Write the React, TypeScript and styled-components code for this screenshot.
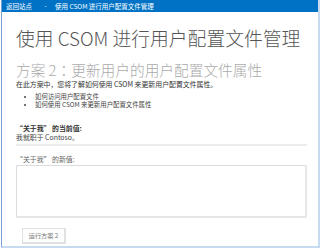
import React from "react";
import styled, { createGlobalStyle } from "styled-components";

const Global = createGlobalStyle`
  html, body { margin: 0; padding: 0; background: #ffffff; }
  body { font-family: "Segoe UI", "Noto Sans CJK SC", "Noto Sans", sans-serif; }
`;

const Frame = styled.div`
  box-sizing: border-box;
  width: 319px;
  height: 248px;
  margin-left: 1px;
  border-left: 1px solid #7c9fd3;
  border-right: 2px solid #c6daf1;
  border-bottom: 2px solid #c6daf1;
  display: flex;
  flex-direction: column;
  overflow: hidden;
  background: #fff;
`;

const TopBar = styled.div`
  height: 12px;
  flex: none;
  background: #0072c6;
  display: flex;
  align-items: center;
  padding-left: 4px;
  color: #fff;
  font-size: 6.5px;
  line-height: 12px;
  white-space: nowrap;
`;

const Crumb = styled.span`
  color: #ffffff;
`;

const Sep = styled.span`
  color: #dfe9f5;
  font-size: 5px;
  margin: 0 7px 0 11px;
`;

const Content = styled.div`
  flex: 1;
  display: flex;
  flex-direction: column;
  padding: 14px 9px 0 14px;
  min-height: 0;
`;

const Title = styled.h1`
  margin: 0;
  font-weight: 300;
  font-size: 18.8px;
  line-height: 24px;
  color: #555555;
  white-space: nowrap;
`;

const Subtitle = styled.h2`
  margin: 11px 0 0;
  font-weight: 300;
  font-size: 14.7px;
  line-height: 18px;
  color: #aaaaaa;
  white-space: nowrap;
`;

const Colon = styled.span`
  font-family: "Noto Sans CJK JP", sans-serif;
`;

const Para = styled.p`
  margin: 0;
  font-size: 6.9px;
  line-height: 10px;
  color: #333;
  white-space: nowrap;
`;

const List = styled.ul`
  margin: 4px 0 0;
  padding-left: 19px;
  list-style: disc;
  font-size: 6.4px;
  line-height: 8px;
  color: #444;
`;

const Item = styled.li`
  white-space: nowrap;
  height: 8px;
`;

const Section = styled.div`
  margin-top: 15px;
  display: flex;
  flex-direction: column;
`;

const Label = styled.div<{ $bold?: boolean }>`
  font-size: 6.9px;
  line-height: 8px;
  font-weight: ${(p) => (p.$bold ? 700 : 400)};
  color: ${(p) => (p.$bold ? "#333" : "#666")};
  white-space: nowrap;
`;

const Value = styled.div`
  margin-top: 1px;
  font-size: 6.9px;
  line-height: 8px;
  color: #444;
  white-space: nowrap;
`;

const Rule = styled.div`
  height: 2px;
  background: #ececec;
  margin: 3px 2px 0 0;
`;

const NewLabel = styled(Label)`
  margin-top: 9px;
`;

const TextBox = styled.div`
  box-sizing: border-box;
  margin: 2px 2px 0 0;
  height: 53px;
  border-style: solid;
  border-width: 1px 2px 2px 1px;
  border-color: #dcdcdc #e6e6e6 #e6e6e6 #dcdcdc;
  background: #fff;
`;

const Button = styled.button`
  align-self: flex-start;
  margin: 10px 0 0 6px;
  box-sizing: border-box;
  width: 44px;
  height: 16px;
  padding: 0;
  border-style: solid;
  border-width: 1px 2px 2px 1px;
  border-color: #e1e1e1;
  background: #fdfdfd;
  font-family: inherit;
  font-size: 6.2px;
  color: #777;
  line-height: 13px;
`;

export default function App() {
  return (
    <>
      <Global />
      <Frame>
        <TopBar>
          <Crumb>返回站点</Crumb>
          <Sep>•</Sep>
          <Crumb>使用 CSOM 进行用户配置文件管理</Crumb>
        </TopBar>
        <Content>
          <Title>使用 CSOM 进行用户配置文件管理</Title>
          <Subtitle>
            方案 2<Colon>：</Colon>更新用户的用户配置文件属性
          </Subtitle>
          <Para>在此方案中，您将了解如何使用 CSOM 来更新用户配置文件属性。</Para>
          <List>
            <Item>如何访问用户配置文件</Item>
            <Item>如何使用 CSOM 来更新用户配置文件属性</Item>
          </List>
          <Section>
            <Label $bold>“关于我” 的当前值:</Label>
            <Value>我就职于 Contoso。</Value>
            <Rule />
            <NewLabel>“关于我” 的新值:</NewLabel>
            <TextBox />
            <Button>运行方案 2</Button>
          </Section>
        </Content>
      </Frame>
    </>
  );
}
